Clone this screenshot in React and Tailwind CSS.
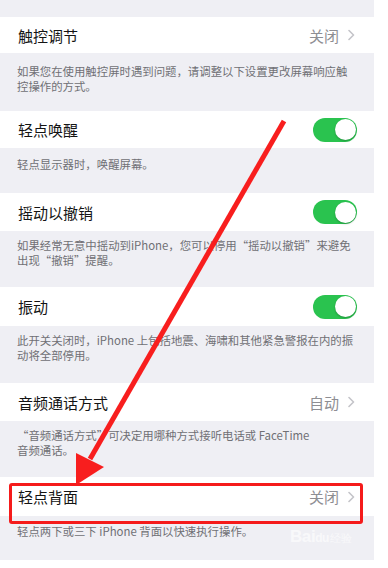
import React from "react";

const FONT = "font-['Noto_Sans_CJK_SC','Noto_Sans',sans-serif]";

function Chevron() {
  return (
    <svg width="7" height="12" viewBox="0 0 7 12" className="ml-[9px]">
      <path d="M1 1.5 L5.5 6 L1 10.5" fill="none" stroke="#c4c4c9" strokeWidth="1.6" strokeLinecap="round" strokeLinejoin="round" />
    </svg>
  );
}

function Toggle() {
  return (
    <div className="w-[44px] h-[24px] rounded-full bg-[#2ac34f] flex items-center justify-end pr-[1.5px]">
      <div className="w-[21px] h-[21px] rounded-full bg-white shadow-[0_1px_2px_rgba(0,0,0,0.25)]" />
    </div>
  );
}

function Row({ title, value, toggle, h }) {
  return (
    <div className={`bg-white flex items-center justify-between pl-[18px] pr-[17px] ${h}`}>
      <span className="text-[15px] text-[#141414] leading-none">{title}</span>
      {toggle ? (
        <Toggle />
      ) : (
        <div className="flex items-center pr-[2px]">
          <span className="text-[15px] text-[#8e8e93] leading-none">{value}</span>
          <Chevron />
        </div>
      )}
    </div>
  );
}

function Footer({ lines, cls }) {
  return (
    <div className={`pl-[17px] text-[11.4px] leading-[15px] text-[#707075] whitespace-nowrap ${cls}`}>
      {lines.map((l, i) => (
        <div key={i}>{l}</div>
      ))}
    </div>
  );
}

export default function App() {
  return (
    <div className={`relative w-[388px] h-[568px] bg-white overflow-hidden ${FONT}`}>
      <div className="w-[374px] h-[560px] bg-[#efeff4] flex flex-col pt-[17px]">
        <Row title="触控调节" value="关闭" h="h-[36px]" />
        <Footer
          cls="pt-[11px] pb-[17px]"
          lines={["如果您在使用触控屏时遇到问题，请调整以下设置更改屏幕响应触", "控操作的方式。"]}
        />
        <Row title="轻点唤醒" toggle h="h-[37px]" />
        <Footer cls="pt-[9px] pb-[21px]" lines={["轻点显示器时，唤醒屏幕。"]} />
        <Row title="摇动以撤销" toggle h="h-[38px]" />
        <Footer
          cls="pt-[7px] pb-[19px]"
          lines={["如果经常无意中摇动到iPhone，您可以停用“摇动以撤销”来避免", "出现“撤销”提醒。"]}
        />
        <Row title="振动" toggle h="h-[39px]" />
        <Footer
          cls="pt-[7px] pb-[20px]"
          lines={["此开关关闭时，iPhone 上包括地震、海啸和其他紧急警报在内的振", "动将全部停用。"]}
        />
        <Row title="音频通话方式" value="自动" h="h-[38px]" />
        <Footer
          cls="pt-[7px] pb-[19px]"
          lines={["“音频通话方式”可决定用哪种方式接听电话或 FaceTime", "音频通话。"]}
        />
        <Row title="轻点背面" value="关闭" h="h-[39px]" />
        <Footer cls="pt-[8px]" lines={["轻点两下或三下 iPhone 背面以快速执行操作。"]} />
      </div>

      <div className="absolute left-[290px] top-[524px] text-[17px] font-bold text-white/60 tracking-tight font-['Liberation_Sans',sans-serif]">
        Bai<span className="text-[12px]">du</span><span className="text-[11px] font-normal ml-[1px]">经验</span>
      </div>

      <div className="absolute left-[9px] top-[483px] w-[354px] h-[41px] border-[3.5px] border-[#f51b1b] rounded-[3px]" />

      <svg className="absolute left-0 top-0" width="388" height="568" viewBox="0 0 388 568">
        <line x1="284" y1="121" x2="90" y2="459" stroke="#f81e1e" strokeWidth="5" />
        <polygon points="76,485 76,453 104,467" fill="#f81e1e" />
      </svg>
    </div>
  );
}
